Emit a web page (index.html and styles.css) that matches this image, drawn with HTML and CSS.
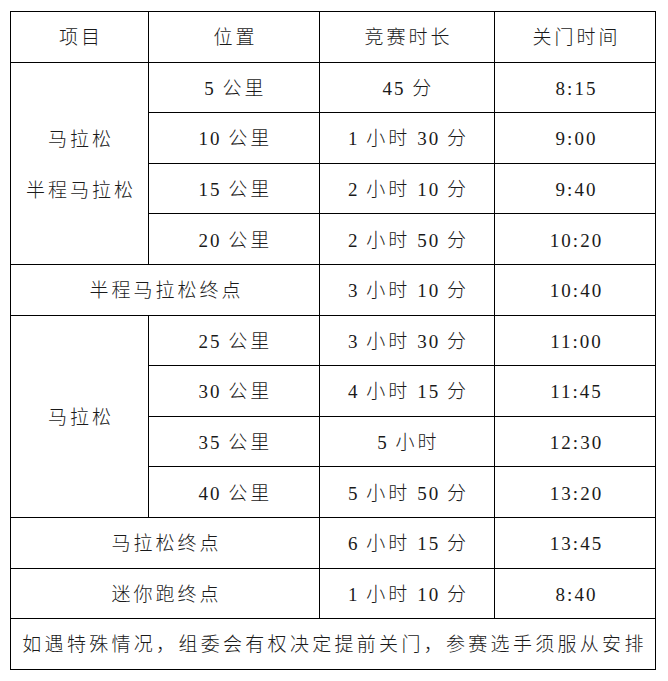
FILE: index.html
```html
<!DOCTYPE html>
<html lang="zh-CN">
<head>
<meta charset="utf-8">
<link rel="stylesheet" href="styles.css">
</head>
<body>
<table class="sched">
  <colgroup>
    <col class="c1"><col class="c2"><col class="c3"><col class="c4">
  </colgroup>
  <tr><td>项目</td><td>位置</td><td>竞赛时长</td><td>关门时间</td></tr>
  <tr><td rowspan="4" class="group">马拉松<br>半程马拉松</td><td><span class="n">5 </span>公里</td><td><span class="n">45 </span>分</td><td class="n">8:15</td></tr>
  <tr><td><span class="n">10 </span>公里</td><td><span class="n">1 </span>小时<span class="n"> 30 </span>分</td><td class="n">9:00</td></tr>
  <tr><td><span class="n">15 </span>公里</td><td><span class="n">2 </span>小时<span class="n"> 10 </span>分</td><td class="n">9:40</td></tr>
  <tr><td><span class="n">20 </span>公里</td><td><span class="n">2 </span>小时<span class="n"> 50 </span>分</td><td class="n">10:20</td></tr>
  <tr><td colspan="2">半程马拉松终点</td><td><span class="n">3 </span>小时<span class="n"> 10 </span>分</td><td class="n">10:40</td></tr>
  <tr><td rowspan="4">马拉松</td><td><span class="n">25 </span>公里</td><td><span class="n">3 </span>小时<span class="n"> 30 </span>分</td><td class="n">11:00</td></tr>
  <tr><td><span class="n">30 </span>公里</td><td><span class="n">4 </span>小时<span class="n"> 15 </span>分</td><td class="n">11:45</td></tr>
  <tr><td><span class="n">35 </span>公里</td><td><span class="n">5 </span>小时</td><td class="n">12:30</td></tr>
  <tr><td><span class="n">40 </span>公里</td><td><span class="n">5 </span>小时<span class="n"> 50 </span>分</td><td class="n">13:20</td></tr>
  <tr><td colspan="2">马拉松终点</td><td><span class="n">6 </span>小时<span class="n"> 15 </span>分</td><td class="n">13:45</td></tr>
  <tr><td colspan="2">迷你跑终点</td><td><span class="n">1 </span>小时<span class="n"> 10 </span>分</td><td class="n">8:40</td></tr>
  <tr><td colspan="4" class="note">如遇特殊情况，组委会有权决定提前关门，参赛选手须服从安排</td></tr>
</table>
</body>
</html>
```
FILE: styles.css
```css
html, body {
  margin: 0;
  padding: 0;
  background: #fff;
}
.sched {
  margin: 11px 0 0 10px;
  border-collapse: collapse;
  table-layout: fixed;
  width: 645px;
  font-family: "Liberation Serif", "Noto Sans CJK SC", serif;
  font-size: 19px;
  font-weight: 300;
  color: #1a1a1a;
  letter-spacing: 3px;
}
.c1 { width: 138px; }
.c2 { width: 171px; }
.c3 { width: 175px; }
.c4 { width: 161px; }
.sched tr { height: 50.6px; }
.sched td {
  border: 1px solid #000;
  padding: 3px 0 0 3px;
  text-align: center;
  vertical-align: middle;
  line-height: 22px;
  white-space: nowrap;
}
.sched .n {
  letter-spacing: 2px;
}
.sched td.group {
  line-height: 51px;
}
.sched td.note {
  letter-spacing: 3.3px;
}
```
